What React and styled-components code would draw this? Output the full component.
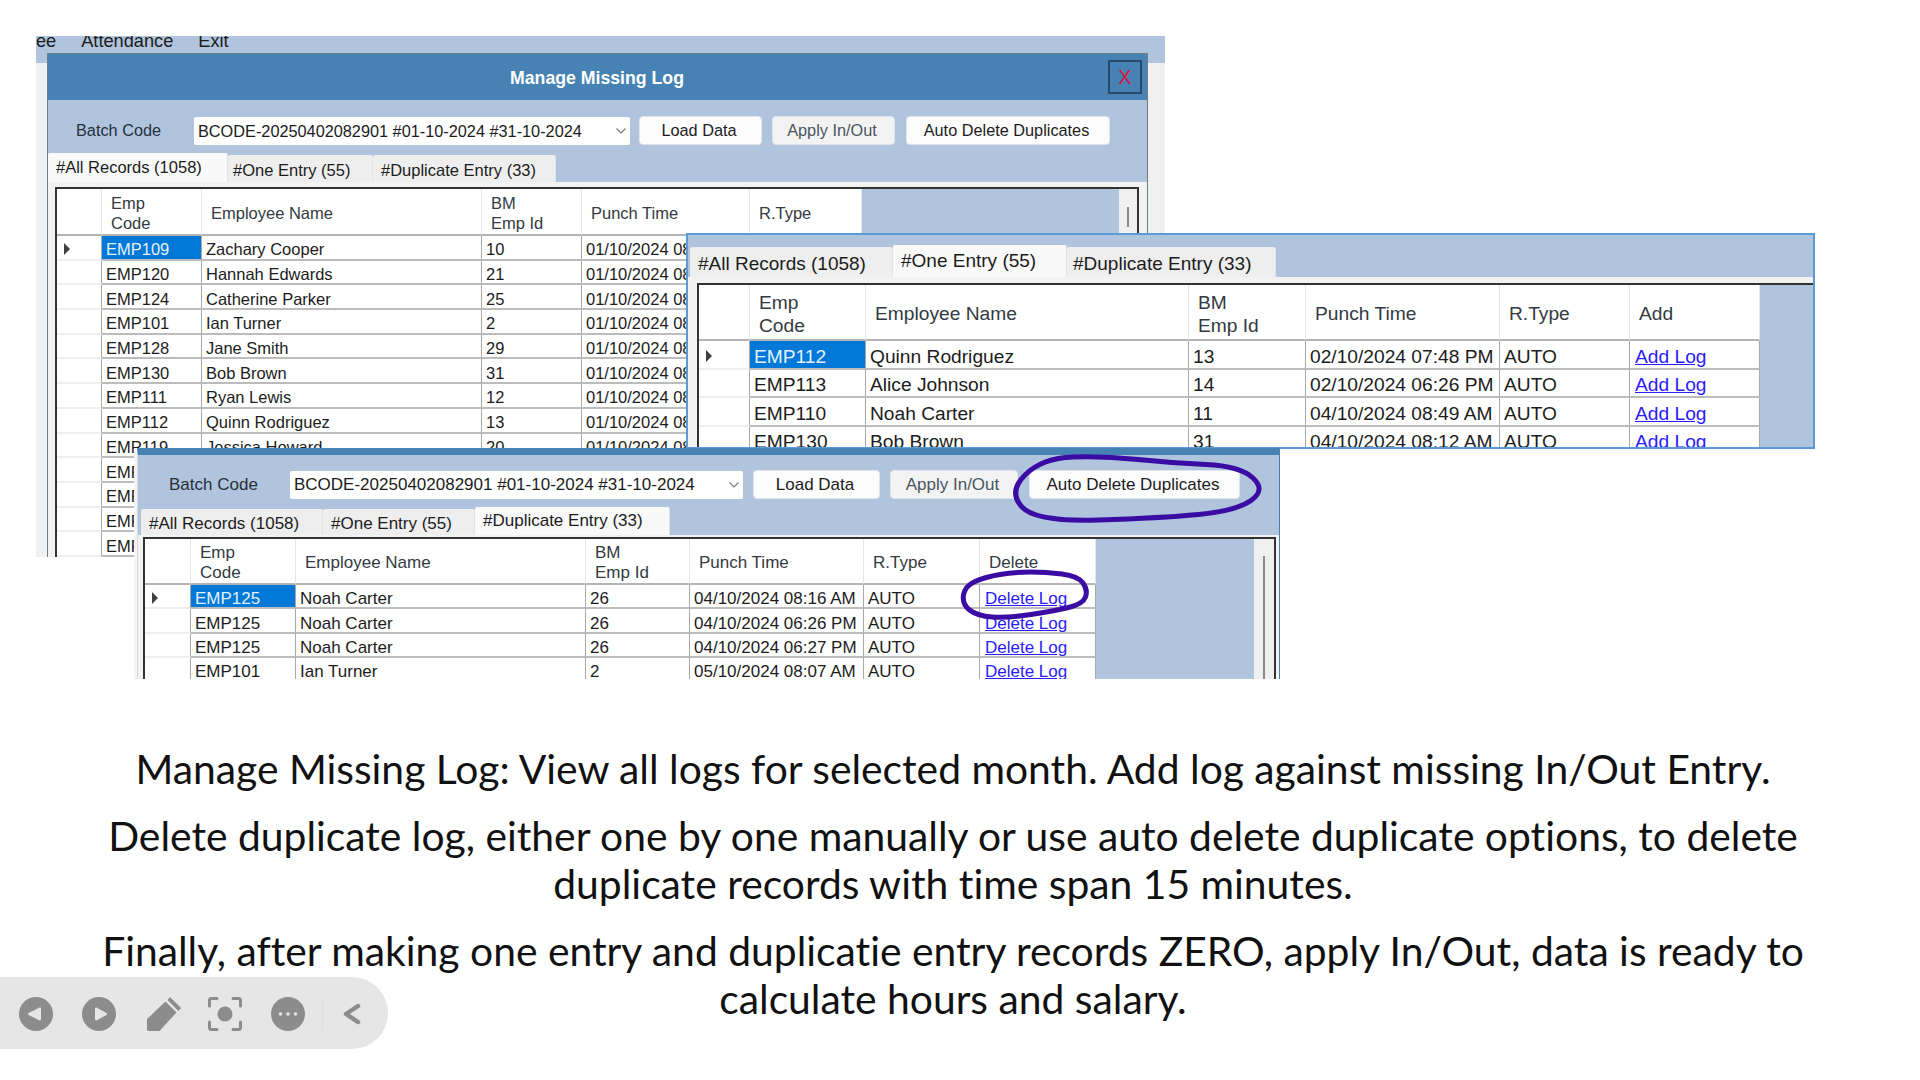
import React from "react";
import styled, { createGlobalStyle } from "styled-components";

const GlobalStyle = createGlobalStyle`
  html, body {
    margin: 0;
    padding: 0;
    background: #ffffff;
  }
  * {
    box-sizing: border-box;
  }
`;

const STEEL = "#4682b4";
const LIGHT_STEEL = "#b0c4de";
const BATCH = "BCODE-20250402082901 #01-10-2024 #31-10-2024";

const Slide = styled.div`
  position: relative;
  width: 1920px;
  height: 1080px;
  overflow: hidden;
  background: #ffffff;
  padding-top: 745px;
`;

/* ---- pasted screenshots ---- */

const BackShot = styled.div`
  position: absolute;
  left: 36px;
  top: 36px;
  width: 1129px;
  height: 521px;
  overflow: hidden;
  display: flex;
  flex-direction: column;
  font-family: "Liberation Sans", Arial, sans-serif;
  color: #1c1c1c;
  background: linear-gradient(${LIGHT_STEEL} 27px, #f0f0f0 27px);
`;

const MenuStrip = styled.div`
  height: 17px;
  flex: none;
  display: flex;
  overflow: hidden;
  font-size: 18.2px;
  line-height: 11px;
`;

const MenuItem = styled.span`
  margin-left: ${({ $gap }) => $gap}px;
`;

const Form = styled.div`
  flex: 1;
  min-height: 0;
  margin: 0 17px 0 11px;
  display: flex;
  flex-direction: column;
  background: ${LIGHT_STEEL};
  border-left: 1px solid #6f7b86;
  border-right: 1px solid #6f7b86;
  border-top: 1px solid #6f7b86;
`;

const TitleBar = styled.div`
  height: 46px;
  flex: none;
  display: flex;
  align-items: center;
  padding: 0 5px 0 38px;
  background: ${STEEL};
`;

const Title = styled.div`
  flex: 1;
  padding-top: 2px;
  text-align: center;
  color: #ffffff;
  font-size: 17.7px;
  font-weight: 700;
`;

const CloseButton = styled.div`
  width: 34px;
  height: 34px;
  display: flex;
  align-items: center;
  justify-content: center;
  border: 2px solid #27496a;
  color: #dc143c;
  font-size: 20px;
`;

const FrontShot = styled.div`
  position: absolute;
  left: 686px;
  top: 233px;
  width: 1129px;
  height: 216px;
  overflow: hidden;
  display: flex;
  flex-direction: column;
  font-family: "Liberation Sans", Arial, sans-serif;
  color: #1c1c1c;
  background: ${LIGHT_STEEL};
  border: 2px solid #5b9bd5;
`;

const BottomShot = styled.div`
  position: absolute;
  left: 137px;
  top: 448px;
  width: 1143px;
  height: 231px;
  overflow: hidden;
  display: flex;
  flex-direction: column;
  font-family: "Liberation Sans", Arial, sans-serif;
  color: #1c1c1c;
  background: ${LIGHT_STEEL};
  border-top: 7px solid ${STEEL};
  border-left: 1px solid #d4dbe3;
  border-right: 1px solid ${STEEL};
  box-shadow: -3px 0 0 #f4f4f4;
`;

/* ---- toolbar ---- */

const ToolRow = styled.div`
  height: ${({ $h }) => $h}px;
  flex: none;
  display: flex;
  align-items: flex-start;
  padding-top: ${({ $top }) => $top}px;
  font-size: ${({ $font }) => $font}px;
`;

const BatchLabel = styled.div`
  width: ${({ $w }) => $w}px;
  height: 29px;
  line-height: 29px;
  padding-left: ${({ $pad }) => $pad}px;
  color: #26303a;
`;

const Combo = styled.div`
  width: ${({ $w }) => $w}px;
  height: 28px;
  margin-top: 1px;
  display: flex;
  align-items: center;
  justify-content: space-between;
  padding: 0 3px 0 4px;
  background: #ffffff;
  border-radius: 2px;
  white-space: nowrap;
  overflow: hidden;
`;

const ToolButton = styled.div`
  width: ${({ $w }) => $w}px;
  height: 29px;
  margin-left: ${({ $gap }) => $gap}px;
  padding-right: 3px;
  display: flex;
  align-items: center;
  justify-content: center;
  background: ${({ $muted }) => ($muted ? "#f3f3f3" : "#fcfcfc")};
  color: ${({ $muted }) => ($muted ? "#4a5560" : "#1c1c1c")};
  border: 1px solid #dfe5ec;
  border-radius: 4px;
  white-space: nowrap;
`;

/* ---- tabs ---- */

const TabRow = styled.div`
  height: ${({ $h }) => $h}px;
  flex: none;
  display: flex;
  align-items: flex-end;
  padding-left: ${({ $pad }) => $pad || 0}px;
  font-size: ${({ $font }) => $font}px;
`;

const Tab = styled.div`
  width: ${({ $w }) => $w}px;
  height: ${({ $active, $h }) => ($active ? $h : $h - 2)}px;
  padding: ${({ $active }) => ($active ? "0" : "3px")} 0 0 ${({ $inset }) => $inset || 8}px;
  display: flex;
  align-items: center;
  white-space: nowrap;
  background: ${({ $active }) => ($active ? "#f9f9f9" : "#eeeeee")};
  border-right: 1px solid #e2e2e2;
  border-radius: 2px 2px 0 0;
`;

/* ---- grid ---- */

const TabPage = styled.div`
  flex: 1;
  min-height: 0;
  display: flex;
  flex-direction: column;
  background: #f2f2f2;
  padding: ${({ $pad }) => $pad};
`;

const Frame = styled.div`
  flex: 1;
  min-height: 0;
  display: flex;
  overflow: hidden;
  background: ${LIGHT_STEEL};
  border: 2px solid #333333;
  border-width: ${({ $open }) => ($open ? "2px 0 0 2px" : "2px 2px 0 2px")};
`;

const GridArea = styled.div`
  flex: 1;
  min-width: 0;
  font-size: ${({ $font }) => $font}px;
`;

const Row = styled.div`
  display: grid;
  grid-template-columns: ${({ $cols }) => $cols.map((c) => `${c}px`).join(" ")};
  height: ${({ $h }) => $h}px;
`;

const HeadCell = styled.div`
  display: flex;
  align-items: center;
  padding: ${({ $drop }) => $drop}px 0 0 9px;
  line-height: ${({ $lh }) => $lh}px;
  background: #ffffff;
  color: #333a41;
  border-right: 1px solid #e6e6e6;
  border-bottom: 2px solid #b4b4b4;
`;

const RowHead = styled.div`
  display: flex;
  align-items: center;
  padding: 3px 0 0 7px;
  background: #ffffff;
  border-right: 1px solid #a8a8a8;
  border-bottom: 2px solid #efefef;
`;

const Arrow = styled.span`
  width: 0;
  height: 0;
  border-top: 6px solid transparent;
  border-bottom: 6px solid transparent;
  border-left: 6px solid #404040;
`;

const Cell = styled.div`
  display: flex;
  align-items: center;
  padding: ${({ $drop }) => $drop}px 0 0 4px;
  overflow: hidden;
  white-space: nowrap;
  background: ${({ $selected }) => ($selected ? "#0078d7" : "#ffffff")};
  color: ${({ $selected }) => ($selected ? "#e4f1fb" : "#1c1c1c")};
  border-right: 1px solid #a8a8a8;
  border-bottom: 2px solid #bcbcbc;
`;

const LinkText = styled.span`
  margin-left: 1px;
  color: #2a1aff;
  text-decoration: underline;
`;

const Scrollbar = styled.div`
  width: ${({ $w }) => $w}px;
  flex: none;
  background: #f0f0f0;
  padding-top: ${({ $top }) => $top}px;
  display: flex;
  justify-content: center;
`;

const Grip = styled.div`
  width: 2px;
  height: ${({ $h }) => $h}px;
  background: #8a8a8a;
`;

/* ---- caption ---- */

const Caption = styled.div`
  width: 1720px;
  margin-left: 93px;
  text-align: center;
  font-family: Lato, "Open Sans", sans-serif;
  font-size: 40.8px;
  font-variant-ligatures: none;
  line-height: 48px;
  color: #111111;
`;

const Para = styled.p`
  margin: 0 0 19px;
`;

/* ---- slideshow controls ---- */

const Controls = styled.div`
  position: absolute;
  left: 0;
  top: 977px;
  width: 388px;
  height: 72px;
  display: flex;
  align-items: center;
  gap: 29px;
  padding: 1px 0 0 19px;
  background: #e6e6e6;
  border-radius: 0 36px 36px 0;
`;

const Divider = styled.div`
  width: 1px;
  height: 34px;
  margin-left: -12px;
  background: #dedede;
`;

const ChevronWrap = styled.div`
  display: flex;
  margin-left: -9px;
`;

const PenSvg = styled.svg`
  margin: 0 -2px 0 2px;
`;

const Scribble = styled.svg`
  position: absolute;
  left: 0;
  top: 0;
  pointer-events: none;
`;

const ICON = "#8c8c8c";
const ICON_BG = "#e6e6e6";

const PrevIcon = () => (
  <svg width="34" height="34" viewBox="0 0 34 34">
    <circle cx="17" cy="17" r="17" fill={ICON} />
    <path d="M10 17L21 11.5V22.5Z" fill={ICON_BG} stroke={ICON_BG} strokeWidth="2" strokeLinejoin="round" />
  </svg>
);

const NextIcon = () => (
  <svg width="34" height="34" viewBox="0 0 34 34">
    <circle cx="17" cy="17" r="17" fill={ICON} />
    <path d="M24 17L14 11.5V22.5Z" fill={ICON_BG} stroke={ICON_BG} strokeWidth="2" strokeLinejoin="round" />
  </svg>
);

const PenIcon = () => (
  <PenSvg width="34" height="34" viewBox="0 0 34 34">
    <path d="M18.5 4.5L29.5 15.5L12.5 34H2Q0 34 0 32V22Z" fill={ICON} />
    <path d="M23 0L34 11L31.5 14L20.5 3Z" fill={ICON} />
  </PenSvg>
);

const CaptureIcon = () => (
  <svg width="34" height="34" viewBox="0 0 34 34" fill="none">
    <path
      d="M1.5 9V3.5Q1.5 1.5 3.5 1.5H9M25 1.5H30.5Q32.5 1.5 32.5 3.5V9M32.5 25V30.5Q32.5 32.5 30.5 32.5H25M9 32.5H3.5Q1.5 32.5 1.5 30.5V25"
      stroke={ICON}
      strokeWidth="3"
      strokeLinecap="round"
    />
    <circle cx="17" cy="17" r="7.5" fill={ICON} />
  </svg>
);

const MoreIcon = () => (
  <svg width="34" height="34" viewBox="0 0 34 34">
    <circle cx="17" cy="17" r="17" fill={ICON} />
    <circle cx="9.5" cy="17" r="1.8" fill={ICON_BG} />
    <circle cx="17" cy="17" r="1.8" fill={ICON_BG} />
    <circle cx="24.5" cy="17" r="1.8" fill={ICON_BG} />
  </svg>
);

const ChevronIcon = () => (
  <svg width="18" height="22" viewBox="0 0 18 22" fill="none">
    <path d="M15 3L3 11L15 19" stroke={ICON} strokeWidth="4.5" strokeLinecap="round" strokeLinejoin="round" />
  </svg>
);

// closed smooth line through hand picked points, for the pen marks
const smoothLoop = (pts) => {
  const mid = (a, b) => [(a[0] + b[0]) / 2, (a[1] + b[1]) / 2];
  const start = mid(pts[pts.length - 1], pts[0]);
  let d = `M${start[0]} ${start[1]}`;
  pts.forEach((p, i) => {
    const m = mid(p, pts[(i + 1) % pts.length]);
    d += `Q${p[0]} ${p[1]} ${m[0]} ${m[1]}`;
  });
  return d;
};

const AUTO_MARK = [
  [1042, 458], [1104, 456], [1172, 463], [1240, 466], [1266, 490],
  [1236, 511], [1161, 518], [1036, 522], [1008, 492],
];

const LOG_MARK = [
  [985, 577], [1015, 572], [1046, 572], [1078, 576], [1088, 590], [1083, 604],
  [1054, 611], [1008, 618], [977, 616], [962, 604], [965, 586],
];

const ChevronDown = () => (
  <svg width="12" height="8" viewBox="0 0 12 8" fill="none">
    <path d="M1.5 1.5L6 6L10.5 1.5" stroke="#7a7a7a" strokeWidth="1.2" />
  </svg>
);

const backRows = [
  ["EMP109", "Zachary Cooper", "10"],
  ["EMP120", "Hannah Edwards", "21"],
  ["EMP124", "Catherine Parker", "25"],
  ["EMP101", "Ian Turner", "2"],
  ["EMP128", "Jane Smith", "29"],
  ["EMP130", "Bob Brown", "31"],
  ["EMP111", "Ryan Lewis", "12"],
  ["EMP112", "Quinn Rodriguez", "13"],
  ["EMP119", "Jessica Howard", "20"],
  ["EMP121", "Olivia Scott", "22"],
  ["EMP122", "Mason Reed", "23"],
  ["EMP123", "Ella Morgan", "24"],
  ["EMP126", "Henry Price", "27"],
].map((r) => [...r, "01/10/2024 08:00 AM", "AUTO"]);

const oneRows = [
  ["EMP112", "Quinn Rodriguez", "13", "02/10/2024 07:48 PM", "AUTO", "Add Log"],
  ["EMP113", "Alice Johnson", "14", "02/10/2024 06:26 PM", "AUTO", "Add Log"],
  ["EMP110", "Noah Carter", "11", "04/10/2024 08:49 AM", "AUTO", "Add Log"],
  ["EMP130", "Bob Brown", "31", "04/10/2024 08:12 AM", "AUTO", "Add Log"],
];

const dupRows = [
  ["EMP125", "Noah Carter", "26", "04/10/2024 08:16 AM", "AUTO", "Delete Log"],
  ["EMP125", "Noah Carter", "26", "04/10/2024 06:26 PM", "AUTO", "Delete Log"],
  ["EMP125", "Noah Carter", "26", "04/10/2024 06:27 PM", "AUTO", "Delete Log"],
  ["EMP101", "Ian Turner", "2", "05/10/2024 08:07 AM", "AUTO", "Delete Log"],
];

const DataGrid = ({ cols, font, headH, headLh, headDrop, rowH, rowDrop, last, rows }) => {
  const heads = ["", ["Emp", "Code"], "Employee Name", ["BM", "Emp Id"], "Punch Time", "R.Type"];
  if (last) heads.push(last);
  return (
    <GridArea $font={font}>
      <Row $cols={cols} $h={headH}>
        {heads.map((h, i) => (
          <HeadCell key={i} $lh={headLh} $drop={headDrop}>
            {Array.isArray(h) ? (
              <span>
                {h[0]}
                <br />
                {h[1]}
              </span>
            ) : (
              h
            )}
          </HeadCell>
        ))}
      </Row>
      {rows.map((r, i) => (
        <Row key={i} $cols={cols} $h={rowH}>
          <RowHead>{i === 0 && <Arrow />}</RowHead>
          {r.map((v, j) => (
            <Cell key={j} $selected={i === 0 && j === 0} $drop={rowDrop}>
              {j === 5 ? <LinkText>{v}</LinkText> : v}
            </Cell>
          ))}
        </Row>
      ))}
    </GridArea>
  );
};

const App = () => {
  return (
    <>
      <GlobalStyle />
      <Slide>
        <BackShot>
          <MenuStrip>
            <MenuItem $gap={0}>ee</MenuItem>
            <MenuItem $gap={25}>Attendance</MenuItem>
            <MenuItem $gap={25}>Exit</MenuItem>
          </MenuStrip>
          <Form>
            <TitleBar>
              <Title>Manage Missing Log</Title>
              <CloseButton>X</CloseButton>
            </TitleBar>
            <ToolRow $h={53} $top={16} $font={16.3}>
              <BatchLabel $w={146} $pad={28}>Batch Code</BatchLabel>
              <Combo $w={436}>
                {BATCH}
                <ChevronDown />
              </Combo>
              <ToolButton $w={123} $gap={9}>Load Data</ToolButton>
              <ToolButton $w={123} $gap={10} $muted>Apply In/Out</ToolButton>
              <ToolButton $w={204} $gap={11}>Auto Delete Duplicates</ToolButton>
            </ToolRow>
            <TabRow $h={29} $font={16.5}>
              <Tab $w={180} $h={29} $active>#All Records (1058)</Tab>
              <Tab $w={145} $h={29} $inset={5}>#One Entry (55)</Tab>
              <Tab $w={183} $h={29}>#Duplicate Entry (33)</Tab>
            </TabRow>
            <TabPage $pad="5px 8px 0 7px">
              <Frame>
                <DataGrid
                  cols={[45, 100, 280, 100, 168, 112]}
                  font={16.5}
                  headH={47}
                  headLh={20}
                  headDrop={2}
                  rowH={24.7}
                  rowDrop={5}
                  rows={backRows}
                />
                <Scrollbar $w={18} $top={18}>
                  <Grip $h={20} />
                </Scrollbar>
              </Frame>
            </TabPage>
          </Form>
        </BackShot>

        <FrontShot>
          <TabRow $h={42} $pad={2} $font={19}>
            <Tab $w={203} $h={32}>#All Records (1058)</Tab>
            <Tab $w={174} $h={32} $active>#One Entry (55)</Tab>
            <Tab $w={209} $h={32} $inset={6}>#Duplicate Entry (33)</Tab>
          </TabRow>
          <TabPage $pad="6px 0 0 9px">
            <Frame $open>
              <DataGrid
                cols={[51, 116, 323, 117, 194, 130, 130]}
                font={19.2}
                headH={56}
                headLh={23}
                headDrop={3}
                rowH={28.5}
                rowDrop={5}
                last="Add"
                rows={oneRows}
              />
            </Frame>
          </TabPage>
        </FrontShot>

        <BottomShot>
          <ToolRow $h={52} $top={15} $font={17}>
            <BatchLabel $w={152} $pad={31}>Batch Code</BatchLabel>
            <Combo $w={453}>
              {BATCH}
              <ChevronDown />
            </Combo>
            <ToolButton $w={127} $gap={10}>Load Data</ToolButton>
            <ToolButton $w={128} $gap={10} $muted>Apply In/Out</ToolButton>
            <ToolButton $w={211} $gap={11}>Auto Delete Duplicates</ToolButton>
          </ToolRow>
          <TabRow $h={28} $pad={3} $font={17}>
            <Tab $w={182} $h={28}>#All Records (1058)</Tab>
            <Tab $w={152} $h={28}>#One Entry (55)</Tab>
            <Tab $w={195} $h={28} $active>#Duplicate Entry (33)</Tab>
          </TabRow>
          <TabPage $pad="2px 3px 0 5px">
            <Frame>
              <DataGrid
                cols={[46, 105, 290, 104, 174, 116, 116]}
                font={17}
                headH={46}
                headLh={20}
                headDrop={4}
                rowH={24.4}
                rowDrop={6}
                last="Delete"
                rows={dupRows}
              />
              <Scrollbar $w={20} $top={17}>
                <Grip $h={130} />
              </Scrollbar>
            </Frame>
          </TabPage>
        </BottomShot>

        <Scribble width="1920" height="1080" viewBox="0 0 1920 1080" fill="none">
          <path d={smoothLoop(AUTO_MARK)} stroke="#3a0ca3" strokeWidth="5" />
          <path d={smoothLoop(LOG_MARK)} stroke="#3a0ca3" strokeWidth="5" />
        </Scribble>

        <Caption>
          <Para>Manage Missing Log: View all logs for selected month. Add log against missing In/Out Entry.</Para>
          <Para>
            Delete duplicate log, either one by one manually or use auto delete duplicate options, to delete
            duplicate records with time span 15 minutes.
          </Para>
          <Para>
            Finally, after making one entry and duplicatie entry records ZERO, apply In/Out, data is ready to
            calculate hours and salary.
          </Para>
        </Caption>

        <Controls>
          <PrevIcon />
          <NextIcon />
          <PenIcon />
          <CaptureIcon />
          <MoreIcon />
          <Divider />
          <ChevronWrap>
            <ChevronIcon />
          </ChevronWrap>
        </Controls>
      </Slide>
    </>
  );
};

export default App;
